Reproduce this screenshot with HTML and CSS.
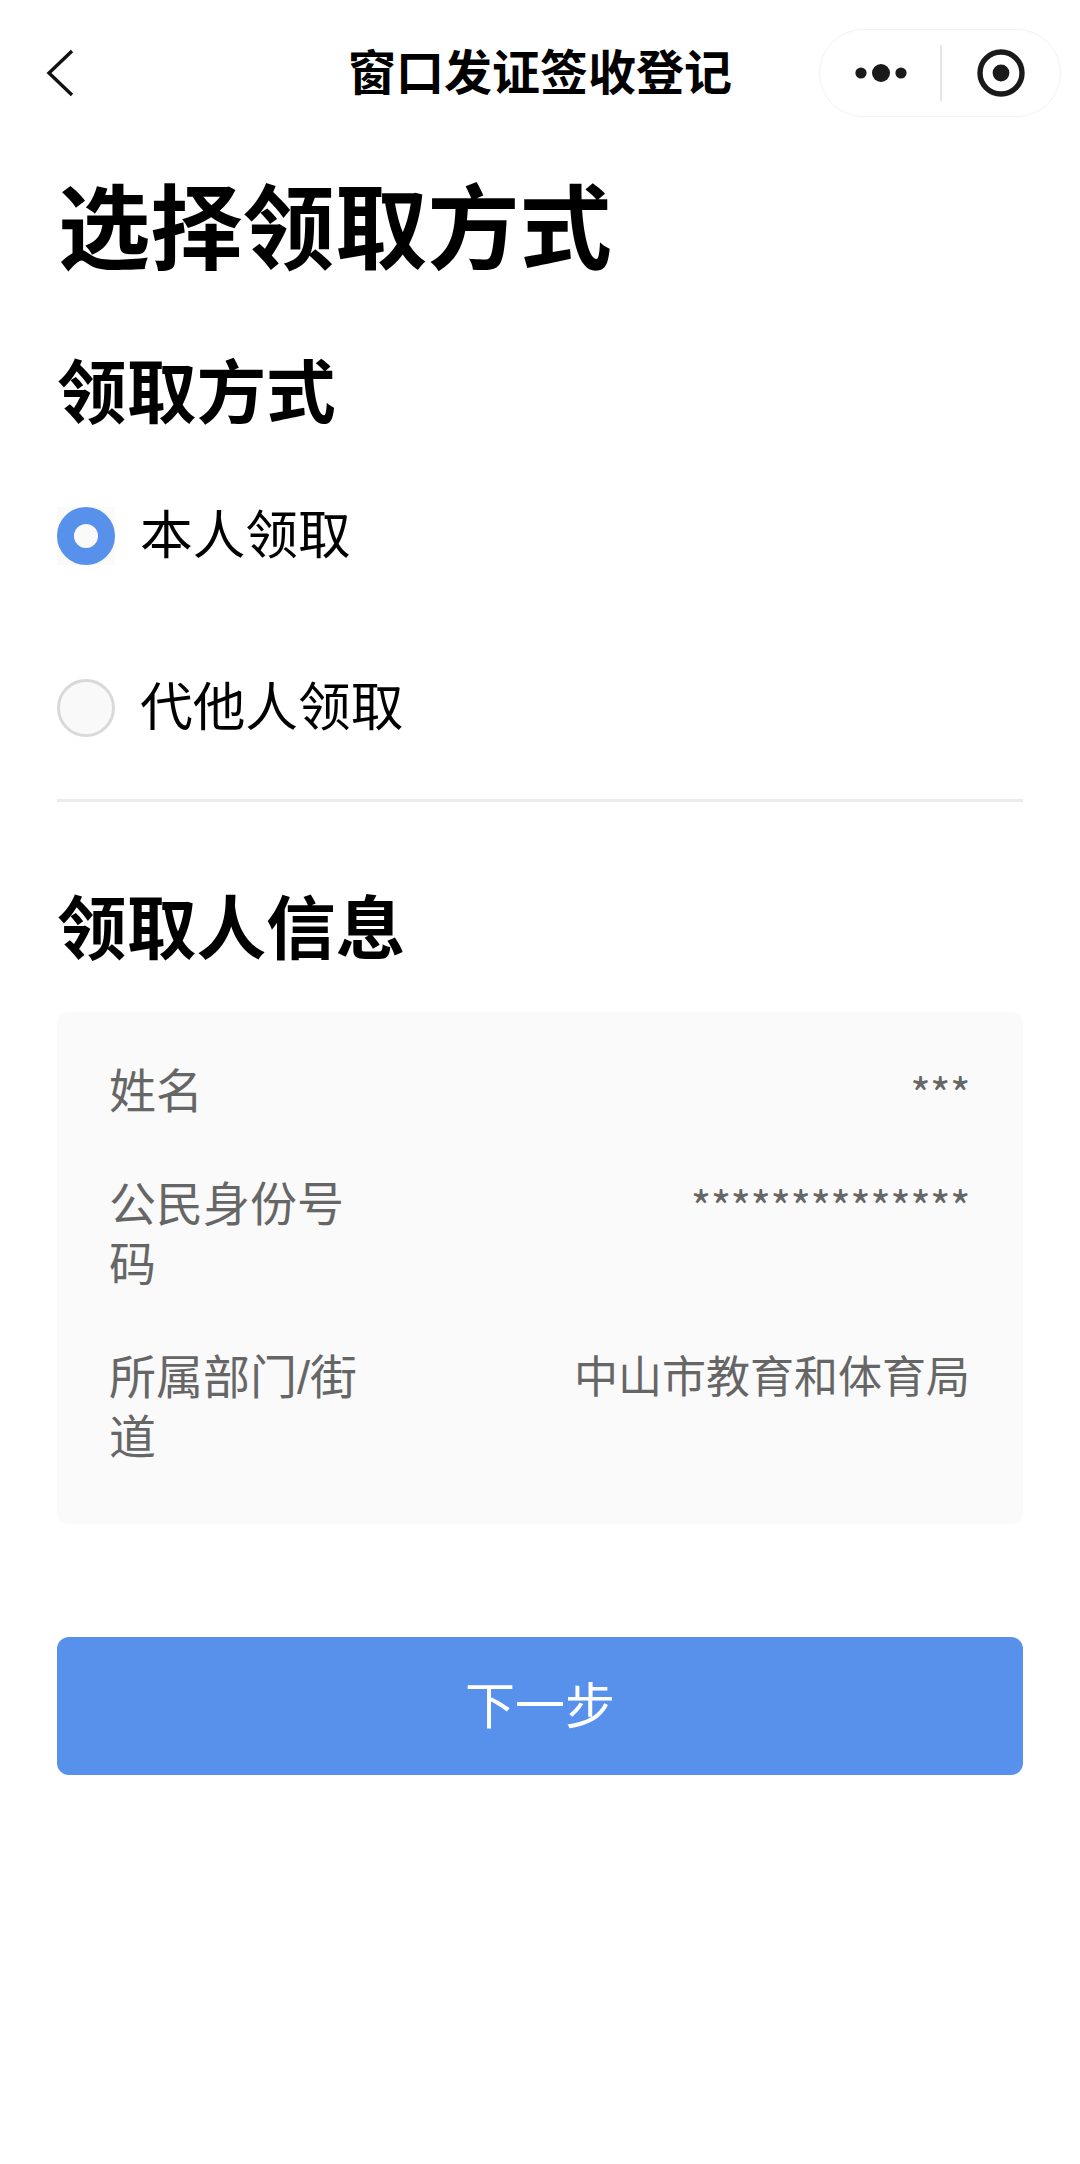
FILE: index.html
```html
<!DOCTYPE html>
<html lang="zh-CN">
<head>
    <meta charset="UTF-8">
    <meta name="viewport" content="width=device-width, initial-scale=1.0">
    <title>窗口发证签收登记</title>
    <link rel="stylesheet" href="styles.css">
</head>
<body>
    <div class="navbar">
        <svg class="nav-back" width="30" height="48" viewBox="0 0 30 48">
            <path d="M27 2 L4 24 L27 46" fill="none" stroke="#111" stroke-width="3.4"/>
        </svg>
        <span class="nav-title">窗口发证签收登记</span>
        <div class="capsule">
            <svg class="capsule-icon" width="56" height="20" viewBox="0 0 56 20">
                <circle cx="6" cy="10" r="5.6" fill="#1a1a1a"/>
                <circle cx="26" cy="10" r="9" fill="#1a1a1a"/>
                <circle cx="46" cy="10" r="5.6" fill="#1a1a1a"/>
            </svg>
            <div class="capsule-line"></div>
            <svg class="capsule-icon" width="48" height="48" viewBox="0 0 48 48">
                <circle cx="24" cy="24" r="21" fill="none" stroke="#1a1a1a" stroke-width="5.4"/>
                <circle cx="24" cy="24" r="8.4" fill="#1a1a1a"/>
            </svg>
        </div>
    </div>

    <div class="content">
        <h1>选择领取方式</h1>
        <h2 class="section-title">领取方式</h2>
        <div class="radio-group">
            <div class="radio-row">
                <span class="radio-box"><span class="radio radio-on"></span></span>
                <span class="radio-label">本人领取</span>
            </div>
            <div class="radio-row">
                <span class="radio"></span>
                <span class="radio-label">代他人领取</span>
            </div>
        </div>
        <div class="divider"></div>
        <h2 class="section-title section-info">领取人信息</h2>
        <div class="info-card">
            <div class="info-row">
                <div class="info-label">姓名</div>
                <div class="info-value info-mask">***</div>
            </div>
            <div class="info-row">
                <div class="info-label">公民身份号码</div>
                <div class="info-value info-mask">**************</div>
            </div>
            <div class="info-row">
                <div class="info-label">所属部门/街道</div>
                <div class="info-value">中山市教育和体育局</div>
            </div>
        </div>
        <button class="next-btn">下一步</button>
    </div>
</body>
</html>
```

FILE: styles.css
```css
* {
    margin: 0;
    padding: 0;
    box-sizing: border-box;
    font-family: "Liberation Sans", "Noto Sans CJK SC", sans-serif;
}

body {
    width: 1080px;
    height: 2164px;
    background-color: #fff;
    color: #000;
    overflow: hidden;
}

/* Top bar */
.navbar {
    position: relative;
    height: 146px;
    display: flex;
    align-items: center;
    justify-content: center;
}

.nav-back {
    position: absolute;
    left: 45px;
    top: 49px;
}

.nav-title {
    font-size: 48px;
    font-weight: bold;
    line-height: 56px;
    margin-top: 2px;
}

.capsule {
    position: absolute;
    left: 819px;
    top: 29px;
    width: 242px;
    height: 88px;
    border: 1px solid #f2f2f2;
    border-radius: 44px;
    display: flex;
    align-items: center;
}

.capsule-icon {
    flex: none;
}

.capsule-icon:first-child {
    margin-left: 35px;
}

.capsule-icon:last-child {
    margin-left: 35px;
}

.capsule-line {
    width: 2px;
    height: 56px;
    margin-left: 29px;
    background-color: #e6e6e6;
}

/* Page body */
.content {
    padding: 0 57px 0 57px;
}

h1 {
    font-size: 92.3px;
    line-height: 120px;
    margin-top: 24px;
    margin-left: 1px;
}

.section-title {
    font-size: 69.7px;
    line-height: 90px;
    margin-top: 59px;
}

.radio-group {
    margin-top: 11px;
}

.radio-row {
    height: 172px;
    display: flex;
    align-items: center;
    gap: 25px;
}

.radio-box {
    display: block;
    width: 58px;
    height: 58px;
    background-color: #fafafa;
}

.radio {
    display: block;
    flex: none;
    width: 58px;
    height: 58px;
    border: 3px solid #d9d9d7;
    border-radius: 50%;
    background-color: #f9f9f9;
}

.radio-on {
    border: 17px solid #5891eb;
    background-color: #fafafa;
}

.radio-label {
    font-size: 52.7px;
    line-height: 60px;
}

.divider {
    height: 3px;
    background-color: #ececec;
    margin-top: 5px;
}

.section-info {
    margin-top: 83px;
}

.info-card {
    margin-top: 37px;
    padding: 50px 53px 56px 52px;
    background-color: #fafafa;
    border-radius: 12px;
}

.info-row {
    display: flex;
    justify-content: space-between;
    margin-bottom: 53px;
    font-size: 47px;
    line-height: 60px;
    color: #666;
}

.info-row:last-child {
    margin-bottom: 0;
}

.info-label {
    width: 250px;
}

.info-value {
    font-size: 44px;
    text-align: right;
}

.info-mask {
    font-family: "Noto Sans CJK SC", sans-serif;
    letter-spacing: -0.6px;
}

.next-btn {
    display: block;
    width: 100%;
    height: 138px;
    padding-bottom: 8px;
    margin-top: 113px;
    border: none;
    border-radius: 12px;
    background-color: #5891eb;
    color: #fff;
    font-size: 50px;
}
```
